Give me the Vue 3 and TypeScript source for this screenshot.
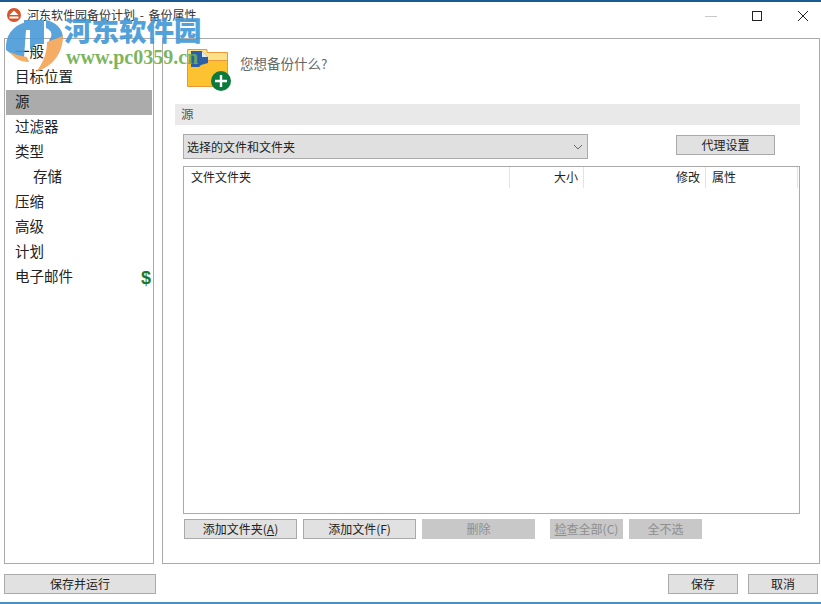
<script setup lang="ts">
const navItems = [
  { label: '一般', indent: false, active: false, paid: false },
  { label: '目标位置', indent: false, active: false, paid: false },
  { label: '源', indent: false, active: true, paid: false },
  { label: '过滤器', indent: false, active: false, paid: false },
  { label: '类型', indent: false, active: false, paid: false },
  { label: '存储', indent: true, active: false, paid: false },
  { label: '压缩', indent: false, active: false, paid: false },
  { label: '高级', indent: false, active: false, paid: false },
  { label: '计划', indent: false, active: false, paid: false },
  { label: '电子邮件', indent: false, active: false, paid: true },
]
</script>

<template>
  <div class="window">
    <div class="titlebar">
      <svg class="app-icon" width="16" height="16" viewBox="0 0 16 16">
        <circle cx="8" cy="8" r="7" fill="#d9542b" />
        <path d="M3.5 8 L8 3.5 L12.5 8 Z" fill="#fff" />
        <rect x="3.5" y="9.5" width="9" height="2" fill="#fff" />
      </svg>
      <span class="title">河东软件园备份计划 - 备份属性</span>
      <div class="controls">
        <svg width="12" height="12" viewBox="0 0 12 12"><path d="M0 6.5H12" stroke="#c8c8c8" fill="none" /></svg>
        <svg width="12" height="12" viewBox="0 0 12 12"><rect x="1.5" y="1.5" width="9" height="9" stroke="#222" fill="none" /></svg>
        <svg width="12" height="12" viewBox="0 0 12 12"><path d="M1 1L11 11M11 1L1 11" stroke="#222" fill="none" /></svg>
      </div>
    </div>

    <div class="body">
      <nav class="sidebar">
        <div
          v-for="item in navItems"
          :key="item.label"
          class="nav-item"
          :class="{ active: item.active, indent: item.indent }"
        >
          <span>{{ item.label }}</span>
          <span v-if="item.paid" class="dollar">$</span>
        </div>
      </nav>

      <main class="panel">
        <div class="head">
          <svg class="folder" width="44" height="44" viewBox="0 0 44 44">
            <path d="M0.5 1.5H20V4.5H40.5V13H0.5Z" fill="#fde08a" stroke="#e8973a" />
            <path d="M0.5 12.5H40.5V38.5H0.5Z" fill="#fcc22f" stroke="#e8973a" />
            <path d="M4 3H15L21 9V15L14 17L12 19H4Z" fill="#2b5fa8" />
            <path d="M15 3L21 9H15Z" fill="#dfe9f5" />
            <circle cx="34" cy="33" r="10" fill="#0b7a3b" />
            <path d="M34 27V39M28 33H40" stroke="#fff" stroke-width="2.4" fill="none" />
          </svg>
          <span class="question">您想备份什么?</span>
        </div>

        <div class="section">源</div>

        <div class="source-row">
          <div class="combo">
            <span>选择的文件和文件夹</span>
            <svg width="10" height="6" viewBox="0 0 10 6"><path d="M1 1L5 5L9 1" stroke="#666" fill="none" /></svg>
          </div>
          <button class="btn proxy">代理设置</button>
        </div>

        <div class="table">
          <div class="thead">
            <div class="th col-name">文件文件夹</div>
            <div class="th col-size">大小</div>
            <div class="th col-mod">修改</div>
            <div class="th col-attr">属性</div>
          </div>
        </div>

        <div class="actions">
          <button class="btn wide">添加文件夹(<u>A</u>)</button>
          <button class="btn wide">添加文件(F)</button>
          <button class="btn wide off">删除</button>
          <button class="btn narrow off first-narrow"><u>检</u>查全部(C)</button>
          <button class="btn narrow off">全不选</button>
        </div>
      </main>
    </div>

    <div class="footer">
      <button class="btn run">保存并运行</button>
      <div class="footer-right">
        <button class="btn small">保存</button>
        <button class="btn small">取消</button>
      </div>
    </div>

    <div class="watermark">
      <svg class="wm-logo" width="70" height="76" viewBox="0 0 70 76">
        <path d="M6 50C5 36 12 26 26 22V30L24 58L14 56Z" fill="#4a9ad8" />
        <path d="M24 20H44V44H36L30 50V30H24Z" fill="#4a9ad8" />
        <path d="M46 20C56 22 63 29 63 38L50 42L49 40C53 36 52 30 46 28Z" fill="#4a9ad8" />
        <path d="M63 36C63 52 54 66 36 72C44 62 47 52 47 42Z" fill="#f4a455" />
        <path d="M10 52C14 58 20 62 29 62L27 57C20 56 14 54 10 52Z" fill="#f4a455" />
      </svg>
      <div class="wm-cn">河东软件园</div>
      <div class="wm-url">www.pc0359.cn</div>
    </div>
  </div>
</template>

<style>
html, body { margin: 0; background: #fff; }
</style>

<style scoped>
.window {
  position: relative;
  width: 821px;
  height: 604px;
  overflow: hidden;
  background: #fff;
  font-family: "Noto Sans CJK SC", "Noto Sans", sans-serif;
  font-size: 12px;
  color: #222;
  display: flex;
  flex-direction: column;
  box-sizing: border-box;
  border-top: 2px solid #1c5a93;
  border-bottom: 2px solid #4a90c4;
}
.titlebar {
  height: 36px;
  flex: none;
  display: flex;
  align-items: flex-start;
  box-sizing: border-box;
  padding: 5px 12px 0 6px;
}
.app-icon { flex: none; margin-right: 5px; }
.title { font-size: 12px; line-height: 16px; color: #333; word-spacing: 2px; }
.controls {
  margin-left: auto;
  display: flex;
  gap: 34px;
  padding-top: 3px;
}
.body {
  flex: none;
  height: 526px;
  display: flex;
  padding-left: 4px;
  gap: 8px;
}
.sidebar {
  width: 150px;
  box-sizing: border-box;
  border: 1px solid #aaa;
  padding: 1px;
}
.nav-item {
  height: 25px;
  box-sizing: border-box;
  display: flex;
  align-items: center;
  justify-content: space-between;
  padding: 0 1px 4px 9px;
  font-size: 14.5px;
  color: #222;
}
.nav-item.active { background: #ababab; }
.nav-item.indent { padding-left: 27px; }
.dollar {
  font-family: "Liberation Sans", sans-serif;
  font-weight: 700;
  font-size: 18px;
  line-height: 18px;
  color: #1a7a2e;
  margin-top: 5px;
}
.panel {
  width: 658px;
  box-sizing: border-box;
  border: 1px solid #aaa;
  padding: 9px 19px 0 12px;
  display: flex;
  flex-direction: column;
}
.head {
  height: 45px;
  display: flex;
  align-items: flex-start;
  padding-left: 12px;
  gap: 9px;
  flex: none;
}
.folder { flex: none; }
.question {
  font-size: 13.5px;
  line-height: 20px;
  margin-top: 5px;
  color: #666;
}
.section {
  flex: none;
  margin-top: 11px;
  height: 21px;
  background: #e9e9e9;
  color: #555;
  line-height: 19px;
  padding-left: 6px;
  font-size: 12.5px;
}
.source-row {
  flex: none;
  margin-top: 9px;
  height: 25px;
  display: flex;
  padding-left: 8px;
}
.combo {
  width: 405px;
  box-sizing: border-box;
  border: 1px solid #aaa;
  background: #e0e0e0;
  display: flex;
  align-items: center;
  justify-content: space-between;
  padding: 0 4px 0 3px;
}
.btn {
  box-sizing: border-box;
  height: 20px;
  padding: 0;
  border: 1px solid #aaa;
  background: #e1e1e1;
  font: inherit;
  color: #222;
  line-height: 18px;
}
.proxy {
  width: 99px;
  margin-left: 88px;
  margin-top: 1px;
}
.table {
  flex: none;
  margin: 7px 0 0 8px;
  width: 617px;
  height: 348px;
  box-sizing: border-box;
  border: 1px solid #aaa;
}
.thead {
  height: 21px;
  display: flex;
}
.th {
  box-sizing: border-box;
  height: 21px;
  line-height: 19px;
  border-right: 1px solid #e3e3e3;
  padding: 0 5px;
}
.col-name { width: 326px; padding-left: 7px; }
.col-size { width: 74px; text-align: right; }
.col-mod { width: 122px; text-align: right; }
.col-attr { width: 92px; padding-left: 6px; }
.actions {
  flex: none;
  margin-top: 5px;
  padding-left: 9px;
  display: flex;
  gap: 6px;
}
.wide { width: 113px; }
.narrow { width: 73px; }
.first-narrow { margin-left: 9px; }
.off {
  background: #c8c8c8;
  border-color: #c8c8c8;
  color: #8e8e8e;
}
.footer {
  flex: none;
  height: 40px;
  display: flex;
  justify-content: space-between;
  padding: 10px 3px 0 4px;
  box-sizing: border-box;
}
.run { width: 152px; }
.footer-right { display: flex; gap: 10px; }
.small { width: 70px; }
.watermark {
  position: absolute;
  left: 0;
  top: -2px;
  width: 240px;
  height: 80px;
  pointer-events: none;
}
.wm-logo { position: absolute; left: 0; top: 0; opacity: 0.9; }
.wm-cn {
  position: absolute;
  left: 64px;
  top: 10px;
  font-family: "Noto Sans CJK SC", sans-serif;
  font-weight: 900;
  font-size: 27.5px;
  line-height: 38px;
  color: #3f97d6;
  opacity: 0.9;
  white-space: nowrap;
}
.wm-url {
  position: absolute;
  left: 66px;
  top: 45px;
  font-family: "Liberation Serif", serif;
  font-weight: 700;
  font-size: 20px;
  line-height: 24px;
  color: #6fae4e;
  opacity: 0.9;
  white-space: nowrap;
}
</style>
